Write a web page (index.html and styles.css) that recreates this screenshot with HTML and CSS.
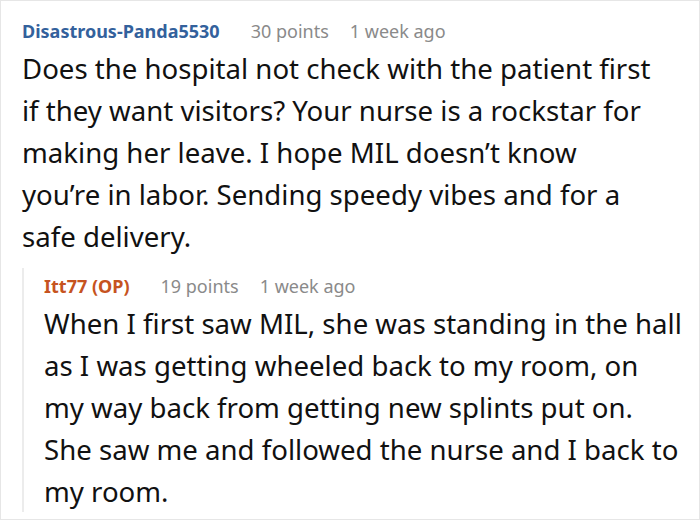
FILE: index.html
```html
<!DOCTYPE html>
<html>
<head>
<meta charset="utf-8">
<link rel="stylesheet" href="styles.css">
</head>
<body>
<div class="frame">
  <div class="comment">
    <div class="meta">
      <span class="user">Disastrous-Panda5530</span>
      <span class="points">30 points</span>
      <span class="time">1 week ago</span>
    </div>
    <p class="text">Does the hospital not check with the patient first<br>if they want visitors? Your nurse is a rockstar for<br>making her leave. I hope MIL doesn’t know<br>you’re in labor. Sending speedy vibes and for a<br>safe delivery.</p>
  </div>
  <div class="reply">
    <div class="meta">
      <span class="user op">Itt77 (OP)</span>
      <span class="points">19 points</span>
      <span class="time">1 week ago</span>
    </div>
    <p class="text">When I first saw MIL, she was standing in the hall<br>as I was getting wheeled back to my room, on<br>my way back from getting new splints put on.<br>She saw me and followed the nurse and I back to<br>my room.</p>
  </div>
</div>
</body>
</html>
```
FILE: styles.css
```css
html, body {
  margin: 0;
  padding: 0;
  background: #fff;
}
.frame {
  width: 700px;
  height: 520px;
  box-sizing: border-box;
  border: 1px solid #e6e6e6;
  padding: 18px 0 0 21px;
  font-family: "Noto Sans", "Open Sans", sans-serif;
  color: #111;
  overflow: hidden;
}
.meta {
  display: flex;
  align-items: center;
  height: 24px;
  font-size: 18px;
  line-height: 24px;
  white-space: nowrap;
}
.user {
  font-weight: 700;
  color: #33619c;
  margin-right: 31px;
}
.user.op {
  color: #c65320;
}
.points {
  color: #8a8a8a;
  margin-right: 21px;
}
.time {
  color: #8a8a8a;
}
.text {
  margin: 4px 0 0 0;
  font-size: 27.6px;
  line-height: 42px;
  white-space: nowrap;
}
.reply {
  margin-top: 11px;
  border-left: 2px solid #ececec;
  padding: 6px 0 0 20px;
}
```
